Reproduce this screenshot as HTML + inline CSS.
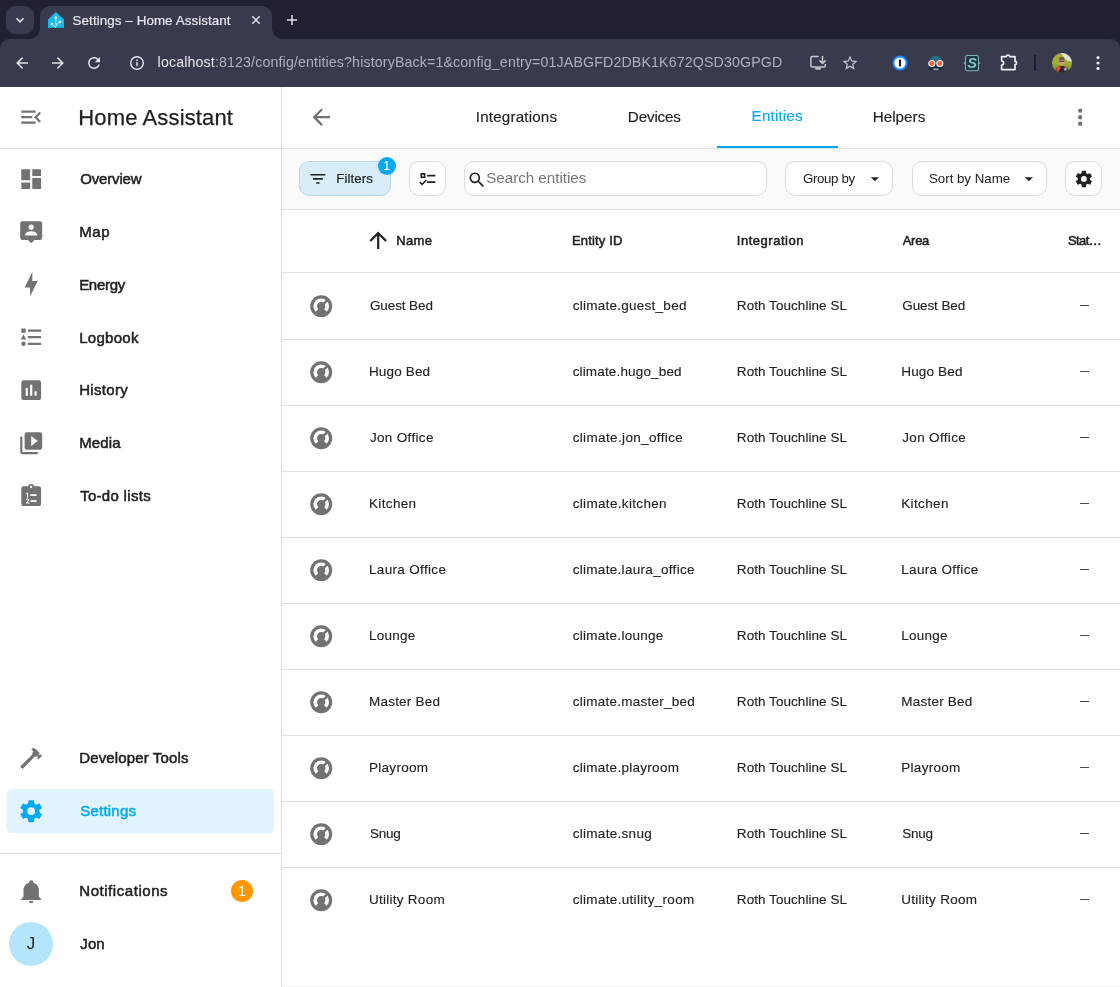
<!DOCTYPE html>
<html><head><meta charset="utf-8"><title>Settings – Home Assistant</title>
<style>
html,body{margin:0;padding:0}
body{width:1120px;height:987px;overflow:hidden;position:relative;background:#fff;font-family:"Liberation Sans",sans-serif}
.t{position:absolute;white-space:nowrap;line-height:1}
.i{position:absolute;display:block}
.b{position:absolute;box-sizing:border-box}
#root{position:absolute;left:0;top:0;width:1120px;height:987px;overflow:hidden;will-change:transform}
</style></head><body><div id="root">
<div class="b" style="left:0;top:0;width:1120px;height:87px;background:#1f2030"></div>
<div class="b" style="left:0;top:39px;width:1120px;height:48px;background:#383a4e;border-radius:9px 9px 0 0"></div>
<div class="b" style="left:40px;top:6px;width:232px;height:34px;background:#383a4e;border-radius:10px 10px 0 0"></div>
<div class="b" style="left:30px;top:29px;width:10px;height:10px;background:radial-gradient(circle at 0 0,#1f2030 9.5px,#383a4e 10px)"></div>
<div class="b" style="left:272px;top:29px;width:10px;height:10px;background:radial-gradient(circle at 100% 0,#1f2030 9.5px,#383a4e 10px)"></div>
<div class="b" style="left:6px;top:6px;width:28px;height:28px;background:#383a4e;border-radius:9px"></div>
<svg class="i" style="left:14px;top:14px" width="12" height="12" viewBox="0 0 12 12"><path d="M2.5 4.3L6 7.8L9.5 4.3" fill="none" stroke="#e8e8ee" stroke-width="1.6"/></svg>
<svg class="i" style="left:48px;top:12px" width="16" height="16" viewBox="0 0 16 16"><path d="M7.9 0L16 7.5V15.8H0V7.5Z" fill="#18bcf2"/><g stroke="#e8f7fd" stroke-width="0.9" fill="none" stroke-linecap="round"><path d="M7.9 5.6V12.3M12 9.75L8.2 13.2L7.6 15.6M3.9 12L7.6 15.6"/></g><g fill="#fff"><circle cx="7.9" cy="5.6" r="1.25"/><circle cx="3.9" cy="12" r="1.25"/><circle cx="12" cy="9.75" r="1.25"/></g></svg>
<div class="t" style="left:72.60px;top:13.65px;font-size:13.4px;font-weight:400;color:#e8e8ee;-webkit-text-stroke:0.2px #e8e8ee;letter-spacing:0.070px;">Settings – Home Assistant</div>
<svg class="i" style="left:250px;top:14px" width="12" height="12" viewBox="0 0 12 12"><path d="M2.3 2.3L9.7 9.7M9.7 2.3L2.3 9.7" stroke="#e3e3e8" stroke-width="1.5"/></svg>
<svg class="i" style="left:286px;top:14px" width="12" height="12" viewBox="0 0 12 12"><path d="M6 1V11M1 6H11" stroke="#e3e3e8" stroke-width="1.5"/></svg>
<svg class="i" style="left:13px;top:54px" width="18" height="18" viewBox="0 0 24 24" fill="#e3e3e8"><path d="M20,11V13H8L13.5,18.5L12.08,19.92L4.16,12L12.08,4.08L13.5,5.5L8,11H20Z"/></svg>
<svg class="i" style="left:49px;top:54px" width="18" height="18" viewBox="0 0 24 24" fill="#e3e3e8"><path d="M4,11V13H16L10.5,18.5L11.92,19.92L19.84,12L11.92,4.08L10.5,5.5L16,11H4Z"/></svg>
<svg class="i" style="left:85px;top:54px" width="18" height="18" viewBox="0 0 24 24" fill="#e3e3e8"><path d="M17.65,6.35C16.2,4.9 14.21,4 12,4A8,8 0 0,0 4,12A8,8 0 0,0 12,20C15.73,20 18.84,17.45 19.73,14H17.65C16.83,16.33 14.61,18 12,18A6,6 0 0,1 6,12A6,6 0 0,1 12,6C13.66,6 15.14,6.69 16.22,7.78L13,11H20V4L17.65,6.35Z"/></svg>
<svg class="i" style="left:129px;top:55px" width="16" height="16" viewBox="0 0 16 16"><circle cx="8" cy="8" r="6.3" fill="none" stroke="#e3e3e8" stroke-width="1.4"/><rect x="7.3" y="7" width="1.4" height="4.2" fill="#e3e3e8"/><circle cx="8" cy="5.2" r="0.85" fill="#e3e3e8"/></svg>
<div class="t" style="left:157.60px;top:55.48px;font-size:14.2px;font-weight:400;color:#aeb0bc;letter-spacing:0.143px;"><span style="color:#e8e8ec">localhost</span>:8123/config/entities?historyBack=1&amp;config_entry=01JABGFD2DBK1K672QSD30GPGD</div>
<svg class="i" style="left:809px;top:54px" width="18" height="18" viewBox="0 0 18 18" fill="none" stroke="#c9c9d0" stroke-width="1.5"><path d="M9.7 2.6H3.2A1.3 1.3 0 0 0 1.9 3.9V11.7A1.3 1.3 0 0 0 3.2 13H15A1.3 1.3 0 0 0 16.3 11.7V9.9"/><path d="M13.5 2V9.3M10.4 6.4L13.5 9.5L16.6 6.4"/><rect x="6.2" y="13.8" width="5.6" height="1.9" fill="#c9c9d0" stroke="none"/></svg>
<svg class="i" style="left:841px;top:54px" width="18" height="18" viewBox="0 0 24 24" fill="#c9c9d0"><path d="M12,15.39L8.24,17.66L9.23,13.38L5.91,10.5L10.29,10.13L12,6.09L13.71,10.13L18.09,10.5L14.77,13.38L15.76,17.66M22,9.24L14.81,8.63L12,2L9.19,8.63L2,9.24L7.45,13.97L5.82,21L12,17.27L18.18,21L16.54,13.97L22,9.24Z"/></svg>
<svg class="i" style="left:892px;top:55px" width="16" height="16" viewBox="0 0 16 16"><circle cx="8" cy="8" r="7.5" fill="#1a8cff"/><circle cx="8" cy="8" r="5.6" fill="#fff"/><rect x="7" y="4.6" width="2" height="6.8" rx="0.5" fill="#1b1b1b"/></svg>
<svg class="i" style="left:927px;top:54px" width="18" height="18" viewBox="0 0 18 18"><path d="M1.9 10C1.9 5 5 1.8 8.8 1.8S15.7 5 15.7 10V16H1.9Z" fill="#2b6f7e"/><rect x="1.9" y="10" width="13.8" height="6" fill="#1b2a35"/><circle cx="4.8" cy="9.5" r="3" fill="#f0603e" stroke="#f2ece8" stroke-width="1.2"/><circle cx="12.8" cy="9.5" r="3" fill="#f0603e" stroke="#f2ece8" stroke-width="1.2"/><rect x="6.2" y="14.6" width="5.4" height="1.3" fill="#9cc7cf"/></svg>
<svg class="i" style="left:963px;top:54px" width="18" height="18" viewBox="0 0 18 18"><rect x="2.5" y="1.5" width="13" height="15.3" rx="1.6" fill="#1e3b45" stroke="#7fb0b8" stroke-width="1.1"/><rect x="0.6" y="8.3" width="1.6" height="1.4" fill="#7fb0b8"/><rect x="15.8" y="8.3" width="1.6" height="1.4" fill="#7fb0b8"/><text x="9.2" y="14.3" font-family="Liberation Sans" font-weight="700" font-style="italic" font-size="14" fill="#8cc2c8" text-anchor="middle">S</text></svg>
<svg class="i" style="left:1000px;top:54px" width="18" height="18" viewBox="0 0 18 18" fill="none" stroke="#f4f4f8" stroke-width="1.6" stroke-linejoin="round"><path d="M1.6 2.6H6.4A1.6 1.6 0 0 1 9.6 2.6H15V7.4A1.6 1.6 0 0 1 15 10.6V15.6H1.6V11A2 2 0 0 0 1.6 7V2.6Z"/></svg>
<div class="b" style="left:1034px;top:55px;width:2px;height:16px;background:#1f2030"></div>
<svg class="i" style="left:1052px;top:53px" width="20" height="20" viewBox="0 0 20 20"><defs><clipPath id="av"><circle cx="10" cy="10" r="10"/></clipPath><linearGradient id="avg" x1="0" y1="0" x2="0" y2="1"><stop offset="0" stop-color="#b8a845"/><stop offset="0.5" stop-color="#9fae2e"/><stop offset="1" stop-color="#6f8a25"/></linearGradient></defs><g clip-path="url(#av)"><rect width="20" height="20" fill="url(#avg)"/><path d="M9 0H20V9L14 7Z" fill="#dfe3dc"/><ellipse cx="9.6" cy="8.6" rx="2.9" ry="3.6" fill="#d29a80"/><path d="M6.7 6.8C6.9 4.6 8.2 4 9.7 4S12.5 4.7 12.6 6.8Z" fill="#5d5650"/><rect x="7" y="7.7" width="5.4" height="1.1" fill="#3b3b40"/><path d="M3 20C3.3 15.5 5.5 13 9.8 13S16.8 15.5 17.3 20Z" fill="#232833"/><path d="M4.6 14.2L8 12.6L8.6 15L5.6 20H4.2Z" fill="#e24a2a"/><path d="M11.6 12.6L15 14L13.8 15.6Z" fill="#e8502c"/><path d="M11.5 15.5L14.5 14.6L15.5 17L12.5 18Z" fill="#9aa0a8"/></g></svg>
<svg class="i" style="left:1089px;top:54px" width="18" height="18" viewBox="0 0 18 18" fill="#f0f0f4"><circle cx="9" cy="3.6" r="1.6"/><circle cx="9" cy="9" r="1.6"/><circle cx="9" cy="14.4" r="1.6"/></svg>
<div class="b" style="left:0;top:87px;width:281px;height:900px;background:#fff"></div>
<div class="b" style="left:281px;top:87px;width:1px;height:900px;background:#e0e0e0"></div>
<div class="b" style="left:0;top:148px;width:1120px;height:1px;background:#e0e0e0"></div>
<svg class="i" style="left:17.95px;top:103.90px;" width="26.4" height="26.4" viewBox="0 0 24 24" fill="#727272"><path d="M21,15.61L19.59,17L14.59,12L19.59,7L21,8.39L17.44,12L21,15.61M3,6H16V8H3V6M3,13V11H13V13H3M3,18V16H16V18H3Z"/></svg>
<div class="t" style="left:78.28px;top:106.87px;font-size:22px;font-weight:400;color:#212121;-webkit-text-stroke:0.25px #212121;letter-spacing:0.139px;">Home Assistant</div>
<svg class="i" style="left:17.95px;top:165.70px;" width="26.4" height="26.4" viewBox="0 0 24 24" fill="#727272"><path d="M13,3V9H21V3M13,21H21V11H13M3,21H11V15H3M3,13H11V3H3V13Z"/></svg>
<div class="t" style="left:80.15px;top:171.10px;font-size:15px;font-weight:400;color:#212121;-webkit-text-stroke:0.5px #212121;letter-spacing:-0.147px;">Overview</div>
<svg class="i" style="left:17.95px;top:218.50px;" width="26.4" height="26.4" viewBox="0 0 24 24" fill="#727272"><path d="M4 2H20C21.1 2 22 2.9 22 4V17C22 18.1 21.1 19 20 19H15L12 22L9 19H4C2.9 19 2 18.1 2 17V4C2 2.9 2.9 2 4 2ZM12 5C10.6 5 9.6 6.1 9.6 7.4S10.6 9.8 12 9.8 14.4 8.7 14.4 7.4 13.4 5 12 5ZM6.5 15H17.5V14.2C17.5 12.3 14 11.2 12 11.2S6.5 12.3 6.5 14.2Z"/></svg>
<div class="t" style="left:79.15px;top:223.90px;font-size:15px;font-weight:400;color:#212121;-webkit-text-stroke:0.5px #212121;letter-spacing:0.681px;">Map</div>
<svg class="i" style="left:17.95px;top:271.30px;" width="26.4" height="26.4" viewBox="0 0 24 24" fill="#727272"><path d="M11 15H6L13 1V9H18L11 23V15Z"/></svg>
<div class="t" style="left:79.15px;top:276.70px;font-size:15px;font-weight:400;color:#212121;-webkit-text-stroke:0.5px #212121;letter-spacing:-0.285px;">Energy</div>
<svg class="i" style="left:17.95px;top:324.10px;" width="26.4" height="26.4" viewBox="0 0 24 24" fill="#727272"><path d="M5,9.5L7.5,14H2.5L5,9.5M3,4H7V8H3V4M5,20A2,2 0 0,0 7,18A2,2 0 0,0 5,16A2,2 0 0,0 3,18A2,2 0 0,0 5,20M9,5V7H21V5H9M9,19H21V17H9V19M9,13H21V11H9V13Z"/></svg>
<div class="t" style="left:79.15px;top:329.50px;font-size:15px;font-weight:400;color:#212121;-webkit-text-stroke:0.5px #212121;letter-spacing:0.291px;">Logbook</div>
<svg class="i" style="left:17.95px;top:376.90px;" width="26.4" height="26.4" viewBox="0 0 24 24" fill="#727272"><path d="M19 3H5C3.9 3 3 3.9 3 5V19C3 20.1 3.9 21 5 21H19C20.1 21 21 20.1 21 19V5C21 3.9 20.1 3 19 3M9 17H7V10H9V17M13 17H11V7H13V17M17 17H15V13H17V17Z"/></svg>
<div class="t" style="left:79.15px;top:382.30px;font-size:15px;font-weight:400;color:#212121;-webkit-text-stroke:0.5px #212121;letter-spacing:0.338px;">History</div>
<svg class="i" style="left:17.95px;top:429.70px;" width="26.4" height="26.4" viewBox="0 0 24 24" fill="#727272"><path d="M4,6H2V20A2,2 0 0,0 4,22H18V20H4V6M20,2H8A2,2 0 0,0 6,4V16A2,2 0 0,0 8,18H20A2,2 0 0,0 22,16V4A2,2 0 0,0 20,2M12,14.5V5.5L18,10L12,14.5Z"/></svg>
<div class="t" style="left:79.15px;top:435.10px;font-size:15px;font-weight:400;color:#212121;-webkit-text-stroke:0.5px #212121;letter-spacing:0.122px;">Media</div>
<svg class="i" style="left:17.95px;top:482.50px;" width="26.4" height="26.4" viewBox="0 0 24 24" fill="#727272"><path d="M19 3H14.8C14.4 1.8 13.3 1 12 1S9.6 1.8 9.2 3H5C3.9 3 3 3.9 3 5V19C3 20.1 3.9 21 5 21H19C20.1 21 21 20.1 21 19V5C21 3.9 20.1 3 19 3ZM12 2.6C12.6 2.6 13 3 13 3.6S12.6 4.6 12 4.6 11 4.2 11 3.6 11.4 2.6 12 2.6Z"/><g fill="#fff"><path d="M7.3 9.3L8.6 8.6H9.2V13.2H8.2V9.7L7.3 10.1Z"/><path d="M7.2 18.6V17.9L8.9 16.1C9.2 15.8 9.3 15.6 9.3 15.3C9.3 15 9.1 14.8 8.7 14.8C8.3 14.8 8.1 15.1 8.1 15.5H7.1C7.1 14.6 7.8 14 8.7 14C9.6 14 10.3 14.5 10.3 15.3C10.3 15.8 10.1 16.1 9.7 16.6L8.6 17.7H10.4V18.6Z"/><rect x="11.3" y="10.2" width="5.6" height="1.6"/><rect x="11.3" y="15.6" width="5.6" height="1.6"/></g></svg>
<div class="t" style="left:80.15px;top:487.90px;font-size:15px;font-weight:400;color:#212121;-webkit-text-stroke:0.5px #212121;letter-spacing:0.298px;">To-do lists</div>
<svg class="i" style="left:17.95px;top:745.10px;" width="26.4" height="26.4" viewBox="0 0 24 24" fill="#727272"><path d="M2 19.63L13.43 8.2L12.72 7.5L14.14 6.07L12 3.89C13.2 2.7 15.09 2.7 16.27 3.89L19.87 7.5L18.45 8.91H21.29L22 9.62L18.45 13.21L17.74 12.5V9.62L16.27 11.04L15.56 10.33L4.13 21.76L2 19.63Z"/></svg>
<div class="t" style="left:79.25px;top:750.20px;font-size:15px;font-weight:400;color:#212121;-webkit-text-stroke:0.5px #212121;letter-spacing:0.132px;">Developer Tools</div>
<div class="b" style="left:7px;top:789px;width:267px;height:44px;background:#e1f3fd;border-radius:4.4px"></div>
<svg class="i" style="left:17.95px;top:797.90px;" width="26.4" height="26.4" viewBox="0 0 24 24" fill="#03a9f4"><path d="M12,15.5A3.5,3.5 0 0,1 8.5,12A3.5,3.5 0 0,1 12,8.5A3.5,3.5 0 0,1 15.5,12A3.5,3.5 0 0,1 12,15.5M19.43,12.97C19.47,12.65 19.5,12.33 19.5,12C19.5,11.67 19.47,11.34 19.43,11L21.54,9.37C21.73,9.22 21.78,8.95 21.66,8.73L19.66,5.27C19.54,5.05 19.27,4.96 19.05,5.05L16.56,6.05C16.04,5.66 15.5,5.32 14.87,5.07L14.5,2.42C14.46,2.18 14.25,2 14,2H10C9.75,2 9.54,2.18 9.5,2.42L9.13,5.07C8.5,5.32 7.96,5.66 7.44,6.05L4.95,5.05C4.73,4.96 4.46,5.05 4.34,5.27L2.34,8.73C2.21,8.95 2.27,9.22 2.46,9.37L4.57,11C4.53,11.34 4.5,11.67 4.5,12C4.5,12.33 4.53,12.65 4.57,12.97L2.46,14.63C2.27,14.78 2.21,15.05 2.34,15.27L4.34,18.73C4.46,18.95 4.73,19.03 4.95,18.95L7.44,17.94C7.96,18.34 8.5,18.68 9.13,18.93L9.5,21.58C9.54,21.82 9.75,22 10,22H14C14.25,22 14.46,21.82 14.5,21.58L14.87,18.93C15.5,18.67 16.04,18.34 16.56,17.94L19.05,18.95C19.27,19.03 19.54,18.95 19.66,18.73L21.66,15.27C21.78,15.05 21.73,14.78 21.54,14.63L19.43,12.97Z"/></svg>
<div class="t" style="left:80.25px;top:802.90px;font-size:15px;font-weight:400;color:#03a9f4;-webkit-text-stroke:0.5px #03a9f4;letter-spacing:0.214px;">Settings</div>
<div class="b" style="left:0;top:853px;width:281px;height:1px;background:#e0e0e0"></div>
<svg class="i" style="left:17.95px;top:877.80px;" width="26.4" height="26.4" viewBox="0 0 24 24" fill="#727272"><path d="M21,19V20H3V19L5,17V11C5,7.9 7.03,5.17 10,4.29C10,4.19 10,4.1 10,4A2,2 0 0,1 12,2A2,2 0 0,1 14,4C14,4.1 14,4.19 14,4.29C16.97,5.17 19,7.9 19,11V17L21,19M14,21A2,2 0 0,1 12,23A2,2 0 0,1 10,21"/></svg>
<div class="t" style="left:79.25px;top:883.40px;font-size:15px;font-weight:400;color:#212121;-webkit-text-stroke:0.5px #212121;letter-spacing:0.550px;">Notifications</div>
<div class="b" style="left:231px;top:880px;width:22px;height:22px;border-radius:11px;background:#ff9800"></div>
<div class="t" style="left:237.90px;top:884.02px;font-size:14.5px;font-weight:400;color:#fff;">1</div>
<div class="b" style="left:9px;top:922px;width:44px;height:44px;border-radius:22px;background:#b3e5fc"></div>
<div class="t" style="left:26.70px;top:934.91px;font-size:17px;font-weight:400;color:#212121;">J</div>
<div class="t" style="left:80.25px;top:936.20px;font-size:15px;font-weight:400;color:#212121;-webkit-text-stroke:0.5px #212121;letter-spacing:0.129px;">Jon</div>
<svg class="i" style="left:307.90px;top:103.50px;" width="26.4" height="26.4" viewBox="0 0 24 24" fill="#727272"><path d="M20,11V13H8L13.5,18.5L12.08,19.92L4.16,12L12.08,4.08L13.5,5.5L8,11H20Z"/></svg>
<div class="t" style="left:475.82px;top:108.73px;font-size:15.2px;font-weight:400;color:#212121;-webkit-text-stroke:0.15px #212121;letter-spacing:0.166px;">Integrations</div>
<div class="t" style="left:627.82px;top:108.73px;font-size:15.2px;font-weight:400;color:#212121;-webkit-text-stroke:0.15px #212121;letter-spacing:-0.145px;">Devices</div>
<div class="t" style="left:751.62px;top:108.43px;font-size:15.2px;font-weight:400;color:#03a9f4;-webkit-text-stroke:0.15px #03a9f4;letter-spacing:0.163px;">Entities</div>
<div class="t" style="left:872.72px;top:108.73px;font-size:15.2px;font-weight:400;color:#212121;-webkit-text-stroke:0.15px #212121;letter-spacing:0.035px;">Helpers</div>
<div class="b" style="left:717px;top:145.5px;width:121px;height:2.5px;background:#03a9f4"></div>
<svg class="i" style="left:1067.00px;top:103.90px;" width="26.4" height="26.4" viewBox="0 0 24 24" fill="#727272"><path d="M12,16A2,2 0 0,1 14,18A2,2 0 0,1 12,20A2,2 0 0,1 10,18A2,2 0 0,1 12,16M12,10A2,2 0 0,1 14,12A2,2 0 0,1 12,14A2,2 0 0,1 10,12A2,2 0 0,1 12,10M12,4A2,2 0 0,1 14,6A2,2 0 0,1 12,8A2,2 0 0,1 10,6A2,2 0 0,1 12,4Z"/></svg>
<div class="b" style="left:282px;top:149px;width:838px;height:60px;background:#fafafa"></div>
<div class="b" style="left:282px;top:209px;width:838px;height:1px;background:#e0e0e0"></div>
<div class="b" style="left:299px;top:161px;width:92px;height:34.5px;background:#d8edf9;border:1px solid #b8d7e8;border-radius:10px"></div>
<svg class="i" style="left:308.00px;top:168.50px;" width="19.8" height="19.8" viewBox="0 0 24 24" fill="#212121"><path d="M6,13H18V11H6M3,6V8H21V6M10,18H14V16H10V18Z"/></svg>
<div class="t" style="left:336.20px;top:172.24px;font-size:13.3px;font-weight:400;color:#212121;-webkit-text-stroke:0.2px #212121;letter-spacing:0.075px;">Filters</div>
<div class="b" style="left:378px;top:157px;width:18px;height:18px;border-radius:9px;background:#03a9f4"></div>
<div class="t" style="left:383.30px;top:160.02px;font-size:12.5px;font-weight:400;color:#fff;">1</div>
<div class="b" style="left:409px;top:161px;width:37px;height:34.5px;background:#fff;border:1px solid #dcdcdc;border-radius:10px"></div>
<svg class="i" style="left:417.50px;top:168.50px;" width="19.8" height="19.8" viewBox="0 0 24 24" fill="#212121"><path d="M3 5H9V11H3V5M5 7V9H7V7H5M11 7H21V9H11V7M11 15H21V17H11V15M5 20L1.5 16.5L2.91 15.09L5 17.17L9.59 12.59L11 14L5 20Z"/></svg>
<div class="b" style="left:464px;top:161px;width:302.5px;height:34.5px;background:#fff;border:1px solid #dcdcdc;border-radius:10px"></div>
<svg class="i" style="left:466.80px;top:169.80px;" width="19.8" height="19.8" viewBox="0 0 24 24" fill="#212121"><path d="M9.5,3A6.5,6.5 0 0,1 16,9.5C16,11.11 15.41,12.59 14.44,13.73L14.71,14H15.5L20.5,19L19,20.5L14,15.5V14.71L13.73,14.44C12.59,15.41 11.11,16 9.5,16A6.5,6.5 0 0,1 3,9.5A6.5,6.5 0 0,1 9.5,3M9.5,5C7,5 5,7 5,9.5C5,12 7,14 9.5,14C12,14 14,12 14,9.5C14,7 12,5 9.5,5Z"/></svg>
<div class="t" style="left:486.20px;top:169.73px;font-size:15.2px;font-weight:400;color:#767676;letter-spacing:-0.026px;">Search entities</div>
<div class="b" style="left:785px;top:161px;width:108px;height:34.5px;background:#fff;border:1px solid #dcdcdc;border-radius:10px"></div>
<div class="t" style="left:802.90px;top:171.64px;font-size:13.3px;font-weight:400;color:#212121;letter-spacing:-0.335px;">Group by</div>
<svg class="i" style="left:864.90px;top:169.10px;" width="19.8" height="19.8" viewBox="0 0 24 24" fill="#212121"><path d="M7,10L12,15L17,10H7Z"/></svg>
<div class="b" style="left:911.5px;top:161px;width:135px;height:34.5px;background:#fff;border:1px solid #dcdcdc;border-radius:10px"></div>
<div class="t" style="left:929.00px;top:171.64px;font-size:13.3px;font-weight:400;color:#212121;letter-spacing:-0.018px;">Sort by Name</div>
<svg class="i" style="left:1018.60px;top:169.10px;" width="19.8" height="19.8" viewBox="0 0 24 24" fill="#212121"><path d="M7,10L12,15L17,10H7Z"/></svg>
<div class="b" style="left:1065.2px;top:161px;width:36.5px;height:34.5px;background:#fff;border:1px solid #dcdcdc;border-radius:10px"></div>
<svg class="i" style="left:1073.80px;top:168.70px;" width="19.8" height="19.8" viewBox="0 0 24 24" fill="#212121"><path d="M12,15.5A3.5,3.5 0 0,1 8.5,12A3.5,3.5 0 0,1 12,8.5A3.5,3.5 0 0,1 15.5,12A3.5,3.5 0 0,1 12,15.5M19.43,12.97C19.47,12.65 19.5,12.33 19.5,12C19.5,11.67 19.47,11.34 19.43,11L21.54,9.37C21.73,9.22 21.78,8.95 21.66,8.73L19.66,5.27C19.54,5.05 19.27,4.96 19.05,5.05L16.56,6.05C16.04,5.66 15.5,5.32 14.87,5.07L14.5,2.42C14.46,2.18 14.25,2 14,2H10C9.75,2 9.54,2.18 9.5,2.42L9.13,5.07C8.5,5.32 7.96,5.66 7.44,6.05L4.95,5.05C4.73,4.96 4.46,5.05 4.34,5.27L2.34,8.73C2.21,8.95 2.27,9.22 2.46,9.37L4.57,11C4.53,11.34 4.5,11.67 4.5,12C4.5,12.33 4.53,12.65 4.57,12.97L2.46,14.63C2.27,14.78 2.21,15.05 2.34,15.27L4.34,18.73C4.46,18.95 4.73,19.03 4.95,18.95L7.44,17.94C7.96,18.34 8.5,18.68 9.13,18.93L9.5,21.58C9.54,21.82 9.75,22 10,22H14C14.25,22 14.46,21.82 14.5,21.58L14.87,18.93C15.5,18.67 16.04,18.34 16.56,17.94L19.05,18.95C19.27,19.03 19.54,18.95 19.66,18.73L21.66,15.27C21.78,15.05 21.73,14.78 21.54,14.63L19.43,12.97Z"/></svg>
<div class="b" style="left:282px;top:272px;width:838px;height:1px;background:#e0e0e0"></div>
<svg class="i" style="left:364.50px;top:226.90px;" width="26.4" height="26.4" viewBox="0 0 24 24" fill="#212121"><path d="M13,20H11V8L5.5,13.5L4.08,12.08L12,4.16L19.92,12.08L18.5,13.5L13,8V20Z"/></svg>
<div class="t" style="left:396.15px;top:233.99px;font-size:13px;font-weight:400;color:#212121;-webkit-text-stroke:0.5px #212121;letter-spacing:0.351px;">Name</div>
<div class="t" style="left:571.95px;top:233.99px;font-size:13px;font-weight:400;color:#212121;-webkit-text-stroke:0.5px #212121;letter-spacing:0.170px;">Entity ID</div>
<div class="t" style="left:736.85px;top:233.99px;font-size:13px;font-weight:400;color:#212121;-webkit-text-stroke:0.5px #212121;letter-spacing:0.510px;">Integration</div>
<div class="t" style="left:902.75px;top:233.99px;font-size:13px;font-weight:400;color:#212121;-webkit-text-stroke:0.5px #212121;letter-spacing:-0.310px;">Area</div>
<div class="t" style="left:1067.95px;top:233.99px;font-size:13px;font-weight:400;color:#212121;-webkit-text-stroke:0.5px #212121;letter-spacing:-0.581px;">Stat…</div>
<div class="b" style="left:282px;top:339px;width:838px;height:1px;background:#e0e0e0"></div>
<svg class="i" style="left:307.90px;top:292.70px;" width="26.4" height="26.4" viewBox="0 0 24 24" fill="#727272"><circle cx="12" cy="12" r="10"/><path fill="#fff" d="M6.98 17.02A7.1 7.1 0 1 1 17.02 17.02L14.69 14.69A3.8 3.8 0 1 0 9.31 14.69Z"/><path d="M14.9 10.66L18.15 7.41L16.59 5.85L13.34 9.1Z"/></svg>
<div class="t" style="left:369.94px;top:299.17px;font-size:13.5px;font-weight:400;color:#212121;-webkit-text-stroke:0.12px #212121;letter-spacing:-0.100px;">Guest Bed</div>
<div class="t" style="left:572.64px;top:299.17px;font-size:13.5px;font-weight:400;color:#212121;-webkit-text-stroke:0.12px #212121;letter-spacing:0.264px;">climate.guest_bed</div>
<div class="t" style="left:736.84px;top:299.17px;font-size:13.5px;font-weight:400;color:#212121;-webkit-text-stroke:0.12px #212121;letter-spacing:0.051px;">Roth Touchline SL</div>
<div class="t" style="left:902.24px;top:299.17px;font-size:13.5px;font-weight:400;color:#212121;-webkit-text-stroke:0.12px #212121;letter-spacing:-0.100px;">Guest Bed</div>
<div class="b" style="left:1080.3px;top:305.20000000000005px;width:9px;height:1px;background:#4a4a4a"></div>
<div class="b" style="left:282px;top:405px;width:838px;height:1px;background:#e0e0e0"></div>
<svg class="i" style="left:307.90px;top:358.70px;" width="26.4" height="26.4" viewBox="0 0 24 24" fill="#727272"><circle cx="12" cy="12" r="10"/><path fill="#fff" d="M6.98 17.02A7.1 7.1 0 1 1 17.02 17.02L14.69 14.69A3.8 3.8 0 1 0 9.31 14.69Z"/><path d="M14.9 10.66L18.15 7.41L16.59 5.85L13.34 9.1Z"/></svg>
<div class="t" style="left:368.94px;top:365.17px;font-size:13.5px;font-weight:400;color:#212121;-webkit-text-stroke:0.12px #212121;letter-spacing:0.163px;">Hugo Bed</div>
<div class="t" style="left:572.64px;top:365.17px;font-size:13.5px;font-weight:400;color:#212121;-webkit-text-stroke:0.12px #212121;letter-spacing:0.161px;">climate.hugo_bed</div>
<div class="t" style="left:736.84px;top:365.17px;font-size:13.5px;font-weight:400;color:#212121;-webkit-text-stroke:0.12px #212121;letter-spacing:0.051px;">Roth Touchline SL</div>
<div class="t" style="left:901.24px;top:365.17px;font-size:13.5px;font-weight:400;color:#212121;-webkit-text-stroke:0.12px #212121;letter-spacing:0.163px;">Hugo Bed</div>
<div class="b" style="left:1080.3px;top:371.20000000000005px;width:9px;height:1px;background:#4a4a4a"></div>
<div class="b" style="left:282px;top:471px;width:838px;height:1px;background:#e0e0e0"></div>
<svg class="i" style="left:307.90px;top:424.70px;" width="26.4" height="26.4" viewBox="0 0 24 24" fill="#727272"><circle cx="12" cy="12" r="10"/><path fill="#fff" d="M6.98 17.02A7.1 7.1 0 1 1 17.02 17.02L14.69 14.69A3.8 3.8 0 1 0 9.31 14.69Z"/><path d="M14.9 10.66L18.15 7.41L16.59 5.85L13.34 9.1Z"/></svg>
<div class="t" style="left:369.94px;top:431.17px;font-size:13.5px;font-weight:400;color:#212121;-webkit-text-stroke:0.12px #212121;letter-spacing:0.328px;">Jon Office</div>
<div class="t" style="left:572.64px;top:431.17px;font-size:13.5px;font-weight:400;color:#212121;-webkit-text-stroke:0.12px #212121;letter-spacing:0.361px;">climate.jon_office</div>
<div class="t" style="left:736.84px;top:431.17px;font-size:13.5px;font-weight:400;color:#212121;-webkit-text-stroke:0.12px #212121;letter-spacing:0.051px;">Roth Touchline SL</div>
<div class="t" style="left:902.24px;top:431.17px;font-size:13.5px;font-weight:400;color:#212121;-webkit-text-stroke:0.12px #212121;letter-spacing:0.328px;">Jon Office</div>
<div class="b" style="left:1080.3px;top:437.20000000000005px;width:9px;height:1px;background:#4a4a4a"></div>
<div class="b" style="left:282px;top:537px;width:838px;height:1px;background:#e0e0e0"></div>
<svg class="i" style="left:307.90px;top:490.70px;" width="26.4" height="26.4" viewBox="0 0 24 24" fill="#727272"><circle cx="12" cy="12" r="10"/><path fill="#fff" d="M6.98 17.02A7.1 7.1 0 1 1 17.02 17.02L14.69 14.69A3.8 3.8 0 1 0 9.31 14.69Z"/><path d="M14.9 10.66L18.15 7.41L16.59 5.85L13.34 9.1Z"/></svg>
<div class="t" style="left:368.94px;top:497.17px;font-size:13.5px;font-weight:400;color:#212121;-webkit-text-stroke:0.12px #212121;letter-spacing:0.360px;">Kitchen</div>
<div class="t" style="left:572.64px;top:497.17px;font-size:13.5px;font-weight:400;color:#212121;-webkit-text-stroke:0.12px #212121;letter-spacing:0.336px;">climate.kitchen</div>
<div class="t" style="left:736.84px;top:497.17px;font-size:13.5px;font-weight:400;color:#212121;-webkit-text-stroke:0.12px #212121;letter-spacing:0.051px;">Roth Touchline SL</div>
<div class="t" style="left:901.24px;top:497.17px;font-size:13.5px;font-weight:400;color:#212121;-webkit-text-stroke:0.12px #212121;letter-spacing:0.360px;">Kitchen</div>
<div class="b" style="left:1080.3px;top:503.20000000000005px;width:9px;height:1px;background:#4a4a4a"></div>
<div class="b" style="left:282px;top:603px;width:838px;height:1px;background:#e0e0e0"></div>
<svg class="i" style="left:307.90px;top:556.70px;" width="26.4" height="26.4" viewBox="0 0 24 24" fill="#727272"><circle cx="12" cy="12" r="10"/><path fill="#fff" d="M6.98 17.02A7.1 7.1 0 1 1 17.02 17.02L14.69 14.69A3.8 3.8 0 1 0 9.31 14.69Z"/><path d="M14.9 10.66L18.15 7.41L16.59 5.85L13.34 9.1Z"/></svg>
<div class="t" style="left:368.94px;top:563.17px;font-size:13.5px;font-weight:400;color:#212121;-webkit-text-stroke:0.12px #212121;letter-spacing:0.336px;">Laura Office</div>
<div class="t" style="left:572.64px;top:563.17px;font-size:13.5px;font-weight:400;color:#212121;-webkit-text-stroke:0.12px #212121;letter-spacing:0.307px;">climate.laura_office</div>
<div class="t" style="left:736.84px;top:563.17px;font-size:13.5px;font-weight:400;color:#212121;-webkit-text-stroke:0.12px #212121;letter-spacing:0.051px;">Roth Touchline SL</div>
<div class="t" style="left:901.24px;top:563.17px;font-size:13.5px;font-weight:400;color:#212121;-webkit-text-stroke:0.12px #212121;letter-spacing:0.336px;">Laura Office</div>
<div class="b" style="left:1080.3px;top:569.2px;width:9px;height:1px;background:#4a4a4a"></div>
<div class="b" style="left:282px;top:669px;width:838px;height:1px;background:#e0e0e0"></div>
<svg class="i" style="left:307.90px;top:622.70px;" width="26.4" height="26.4" viewBox="0 0 24 24" fill="#727272"><circle cx="12" cy="12" r="10"/><path fill="#fff" d="M6.98 17.02A7.1 7.1 0 1 1 17.02 17.02L14.69 14.69A3.8 3.8 0 1 0 9.31 14.69Z"/><path d="M14.9 10.66L18.15 7.41L16.59 5.85L13.34 9.1Z"/></svg>
<div class="t" style="left:368.94px;top:629.17px;font-size:13.5px;font-weight:400;color:#212121;-webkit-text-stroke:0.12px #212121;letter-spacing:0.248px;">Lounge</div>
<div class="t" style="left:572.64px;top:629.17px;font-size:13.5px;font-weight:400;color:#212121;-webkit-text-stroke:0.12px #212121;letter-spacing:0.280px;">climate.lounge</div>
<div class="t" style="left:736.84px;top:629.17px;font-size:13.5px;font-weight:400;color:#212121;-webkit-text-stroke:0.12px #212121;letter-spacing:0.051px;">Roth Touchline SL</div>
<div class="t" style="left:901.24px;top:629.17px;font-size:13.5px;font-weight:400;color:#212121;-webkit-text-stroke:0.12px #212121;letter-spacing:0.248px;">Lounge</div>
<div class="b" style="left:1080.3px;top:635.2px;width:9px;height:1px;background:#4a4a4a"></div>
<div class="b" style="left:282px;top:735px;width:838px;height:1px;background:#e0e0e0"></div>
<svg class="i" style="left:307.90px;top:688.70px;" width="26.4" height="26.4" viewBox="0 0 24 24" fill="#727272"><circle cx="12" cy="12" r="10"/><path fill="#fff" d="M6.98 17.02A7.1 7.1 0 1 1 17.02 17.02L14.69 14.69A3.8 3.8 0 1 0 9.31 14.69Z"/><path d="M14.9 10.66L18.15 7.41L16.59 5.85L13.34 9.1Z"/></svg>
<div class="t" style="left:368.94px;top:695.17px;font-size:13.5px;font-weight:400;color:#212121;-webkit-text-stroke:0.12px #212121;letter-spacing:0.229px;">Master Bed</div>
<div class="t" style="left:572.64px;top:695.17px;font-size:13.5px;font-weight:400;color:#212121;-webkit-text-stroke:0.12px #212121;letter-spacing:0.252px;">climate.master_bed</div>
<div class="t" style="left:736.84px;top:695.17px;font-size:13.5px;font-weight:400;color:#212121;-webkit-text-stroke:0.12px #212121;letter-spacing:0.051px;">Roth Touchline SL</div>
<div class="t" style="left:901.24px;top:695.17px;font-size:13.5px;font-weight:400;color:#212121;-webkit-text-stroke:0.12px #212121;letter-spacing:0.229px;">Master Bed</div>
<div class="b" style="left:1080.3px;top:701.2px;width:9px;height:1px;background:#4a4a4a"></div>
<div class="b" style="left:282px;top:801px;width:838px;height:1px;background:#e0e0e0"></div>
<svg class="i" style="left:307.90px;top:754.70px;" width="26.4" height="26.4" viewBox="0 0 24 24" fill="#727272"><circle cx="12" cy="12" r="10"/><path fill="#fff" d="M6.98 17.02A7.1 7.1 0 1 1 17.02 17.02L14.69 14.69A3.8 3.8 0 1 0 9.31 14.69Z"/><path d="M14.9 10.66L18.15 7.41L16.59 5.85L13.34 9.1Z"/></svg>
<div class="t" style="left:368.94px;top:761.17px;font-size:13.5px;font-weight:400;color:#212121;-webkit-text-stroke:0.12px #212121;letter-spacing:0.301px;">Playroom</div>
<div class="t" style="left:572.64px;top:761.17px;font-size:13.5px;font-weight:400;color:#212121;-webkit-text-stroke:0.12px #212121;letter-spacing:0.286px;">climate.playroom</div>
<div class="t" style="left:736.84px;top:761.17px;font-size:13.5px;font-weight:400;color:#212121;-webkit-text-stroke:0.12px #212121;letter-spacing:0.051px;">Roth Touchline SL</div>
<div class="t" style="left:901.24px;top:761.17px;font-size:13.5px;font-weight:400;color:#212121;-webkit-text-stroke:0.12px #212121;letter-spacing:0.301px;">Playroom</div>
<div class="b" style="left:1080.3px;top:767.2px;width:9px;height:1px;background:#4a4a4a"></div>
<div class="b" style="left:282px;top:867px;width:838px;height:1px;background:#e0e0e0"></div>
<svg class="i" style="left:307.90px;top:820.70px;" width="26.4" height="26.4" viewBox="0 0 24 24" fill="#727272"><circle cx="12" cy="12" r="10"/><path fill="#fff" d="M6.98 17.02A7.1 7.1 0 1 1 17.02 17.02L14.69 14.69A3.8 3.8 0 1 0 9.31 14.69Z"/><path d="M14.9 10.66L18.15 7.41L16.59 5.85L13.34 9.1Z"/></svg>
<div class="t" style="left:369.94px;top:827.17px;font-size:13.5px;font-weight:400;color:#212121;-webkit-text-stroke:0.12px #212121;letter-spacing:-0.214px;">Snug</div>
<div class="t" style="left:572.64px;top:827.17px;font-size:13.5px;font-weight:400;color:#212121;-webkit-text-stroke:0.12px #212121;letter-spacing:0.300px;">climate.snug</div>
<div class="t" style="left:736.84px;top:827.17px;font-size:13.5px;font-weight:400;color:#212121;-webkit-text-stroke:0.12px #212121;letter-spacing:0.051px;">Roth Touchline SL</div>
<div class="t" style="left:902.24px;top:827.17px;font-size:13.5px;font-weight:400;color:#212121;-webkit-text-stroke:0.12px #212121;letter-spacing:-0.214px;">Snug</div>
<div class="b" style="left:1080.3px;top:833.2px;width:9px;height:1px;background:#4a4a4a"></div>
<svg class="i" style="left:307.90px;top:886.70px;" width="26.4" height="26.4" viewBox="0 0 24 24" fill="#727272"><circle cx="12" cy="12" r="10"/><path fill="#fff" d="M6.98 17.02A7.1 7.1 0 1 1 17.02 17.02L14.69 14.69A3.8 3.8 0 1 0 9.31 14.69Z"/><path d="M14.9 10.66L18.15 7.41L16.59 5.85L13.34 9.1Z"/></svg>
<div class="t" style="left:368.94px;top:893.17px;font-size:13.5px;font-weight:400;color:#212121;-webkit-text-stroke:0.12px #212121;letter-spacing:0.270px;">Utility Room</div>
<div class="t" style="left:572.64px;top:893.17px;font-size:13.5px;font-weight:400;color:#212121;-webkit-text-stroke:0.12px #212121;letter-spacing:0.321px;">climate.utility_room</div>
<div class="t" style="left:736.84px;top:893.17px;font-size:13.5px;font-weight:400;color:#212121;-webkit-text-stroke:0.12px #212121;letter-spacing:0.051px;">Roth Touchline SL</div>
<div class="t" style="left:901.24px;top:893.17px;font-size:13.5px;font-weight:400;color:#212121;-webkit-text-stroke:0.12px #212121;letter-spacing:0.270px;">Utility Room</div>
<div class="b" style="left:1080.3px;top:899.2px;width:9px;height:1px;background:#4a4a4a"></div>
<div class="b" style="left:282px;top:986px;width:838px;height:1px;background:#f2f2f2"></div>
</div></body></html>
